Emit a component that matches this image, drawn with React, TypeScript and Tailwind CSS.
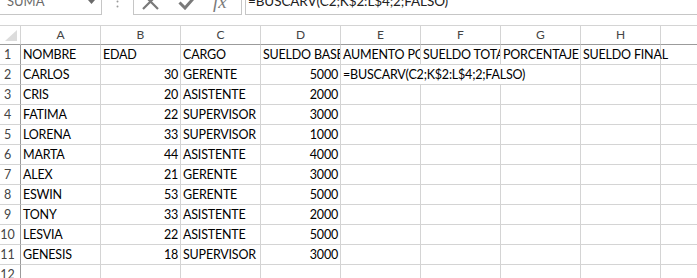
import React from "react";

const data: string[][] = [
  ["CARLOS", "30", "GERENTE", "5000"],
  ["CRIS", "20", "ASISTENTE", "2000"],
  ["FATIMA", "22", "SUPERVISOR", "3000"],
  ["LORENA", "33", "SUPERVISOR", "1000"],
  ["MARTA", "44", "ASISTENTE", "4000"],
  ["ALEX", "21", "GERENTE", "3000"],
  ["ESWIN", "53", "GERENTE", "5000"],
  ["TONY", "33", "ASISTENTE", "2000"],
  ["LESVIA", "22", "ASISTENTE", "5000"],
  ["GENESIS", "18", "SUPERVISOR", "3000"],
];

const headers = ["NOMBRE", "EDAD", "CARGO", "SUELDO BASE", "AUMENTO POR CARGO", "SUELDO TOTAL", "PORCENTAJE"];
const letters = ["A", "B", "C", "D", "E", "F", "G", "H", "I"];

function Cell({
  children,
  right,
  w = "w-[80px]",
  spill,
}: {
  children?: React.ReactNode;
  right?: boolean;
  w?: string;
  spill?: boolean;
}) {
  return (
    <div
      className={`${w} h-[20px] shrink-0 ${spill ? "overflow-visible" : "overflow-hidden"} whitespace-nowrap border-b border-r border-[#d4d4d4] px-[2px] text-[12.5px] leading-[19px] tracking-[-0.2px] text-black ${right ? "text-right" : "text-left"}`}
    >
      {children}
    </div>
  );
}

function RowHead({ n }: { n: number }) {
  return (
    <div className="h-[20px] w-[21px] shrink-0 border-b border-r border-b-[#d4d4d4] border-r-[#9b9b9b] pr-[5px] text-center text-[12.5px] leading-[19px] text-[#444]">
      {n}
    </div>
  );
}

export default function App() {
  return (
    <div className="h-[278px] w-[697px] overflow-hidden bg-white font-['Lato',sans-serif]">
      {/* formula bar */}
      <div className="-mt-[11px] flex h-[26px]">
        <div className="flex w-[102px] shrink-0 items-center justify-between border-b border-r border-[#c6c6c6] pl-[7px] pr-[6px] text-[13px] text-[#6a6a6a]">
          <span>SUMA</span>
          <svg width="7" height="4" viewBox="0 0 7 4">
            <path d="M0 0h7L3.5 4z" fill="#6a6a6a" />
          </svg>
        </div>
        <div className="flex w-[31px] shrink-0 items-center justify-center">
          <svg width="3" height="14" viewBox="0 0 3 14">
            <circle cx="1.5" cy="1.5" r="1" fill="#9a9a9a" />
            <circle cx="1.5" cy="6.5" r="1" fill="#9a9a9a" />
            <circle cx="1.5" cy="11.5" r="1" fill="#9a9a9a" />
          </svg>
        </div>
        <div className="flex w-[109px] shrink-0 items-center border-b border-l border-r border-[#c6c6c6]">
          <svg className="ml-[8px]" width="17" height="17" viewBox="0 0 17 17">
            <path d="M1 1L16 16M16 1L1 16" stroke="#7a7a7a" strokeWidth="2.2" />
          </svg>
          <svg className="ml-[19px]" width="19" height="16" viewBox="0 0 19 16">
            <path d="M1.5 8.5L7 14L17.5 2" stroke="#7a7a7a" strokeWidth="3" fill="none" />
          </svg>
          <span className="ml-[16px] font-['Liberation_Serif',serif] text-[19px] italic leading-none text-[#7a7a7a]">fx</span>
        </div>
        <div className="w-[3px] shrink-0" />
        <div className="flex flex-1 items-center border-b border-l border-[#c6c6c6] pl-[2px] text-[13.5px] tracking-[-0.1px] text-[#222]">
          =BUSCARV(C2;K$2:L$4;2;FALSO)
        </div>
      </div>

      {/* sheet */}
      <div className="mt-[10px]">
        {/* column headers */}
        <div className="flex">
          <div className="relative h-[20px] w-[21px] shrink-0 border-b border-r border-t border-b-[#9b9b9b] border-r-[#d4d4d4] border-t-[#d4d4d4]">
            <svg className="absolute left-[5px] top-[4px]" width="12" height="11" viewBox="0 0 12 11">
              <path d="M12 0V11H0z" fill="#dcdcdc" />
            </svg>
          </div>
          {letters.map((l) => (
            <div
              key={l}
              className="h-[20px] w-[80px] shrink-0 border-b border-r border-t border-b-[#9b9b9b] border-r-[#d4d4d4] border-t-[#d4d4d4] text-center text-[12px] leading-[18px] text-[#444]"
            >
              {l}
            </div>
          ))}
        </div>

        {/* row 1 */}
        <div className="flex">
          <RowHead n={1} />
          {headers.map((h) => (
            <Cell key={h}>{h}</Cell>
          ))}
          <Cell spill>SUELDO FINAL</Cell>
          <Cell />
        </div>

        {data.map((r, i) => (
          <div className="flex" key={i}>
            <RowHead n={i + 2} />
            <Cell>{r[0]}</Cell>
            <Cell right>{r[1]}</Cell>
            <Cell>{r[2]}</Cell>
            <Cell right>{r[3]}</Cell>
            {i === 0 ? (
              <Cell w="w-[240px]">=BUSCARV(C2;K$2:L$4;2;FALSO)</Cell>
            ) : (
              <>
                <Cell />
                <Cell />
                <Cell />
              </>
            )}
            <Cell />
            <Cell />
          </div>
        ))}

        <div className="flex">
          <RowHead n={12} />
          {letters.map((l) => (
            <Cell key={l} />
          ))}
        </div>
      </div>
    </div>
  );
}
